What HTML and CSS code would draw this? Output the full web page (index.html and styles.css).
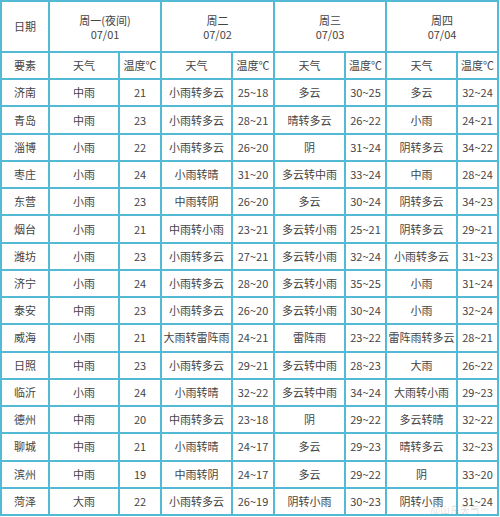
FILE: index.html
```html
<!DOCTYPE html>
<html lang="zh-CN">
<head>
<meta charset="utf-8">
<title>山东天气预报</title>
<link rel="stylesheet" href="styles.css">
</head>
<body>
<div class="page">
<div class="grid">
  <div class="c">日期</div>
  <div class="c day"><span>周一(夜间)</span><span>07/01</span></div>
  <div class="c day"><span>周二</span><span>07/02</span></div>
  <div class="c day"><span>周三</span><span>07/03</span></div>
  <div class="c day"><span>周四</span><span>07/04</span></div>

  <div class="c">要素</div>
  <div class="c">天气</div><div class="c">温度℃</div>
  <div class="c">天气</div><div class="c">温度℃</div>
  <div class="c">天气</div><div class="c">温度℃</div>
  <div class="c">天气</div><div class="c">温度℃</div>

  <div class="c">济南</div><div class="c">中雨</div><div class="c">21</div><div class="c">小雨转多云</div><div class="c">25~18</div><div class="c">多云</div><div class="c">30~25</div><div class="c">多云</div><div class="c">32~24</div>
  <div class="c">青岛</div><div class="c">中雨</div><div class="c">23</div><div class="c">小雨转多云</div><div class="c">28~21</div><div class="c">晴转多云</div><div class="c">26~22</div><div class="c">小雨</div><div class="c">24~21</div>
  <div class="c">淄博</div><div class="c">小雨</div><div class="c">22</div><div class="c">小雨转多云</div><div class="c">26~20</div><div class="c">阴</div><div class="c">31~24</div><div class="c">阴转多云</div><div class="c">34~22</div>
  <div class="c">枣庄</div><div class="c">小雨</div><div class="c">24</div><div class="c">小雨转晴</div><div class="c">31~20</div><div class="c">多云转中雨</div><div class="c">33~24</div><div class="c">中雨</div><div class="c">28~24</div>
  <div class="c">东营</div><div class="c">小雨</div><div class="c">23</div><div class="c">中雨转阴</div><div class="c">26~20</div><div class="c">多云</div><div class="c">30~24</div><div class="c">阴转多云</div><div class="c">34~23</div>
  <div class="c">烟台</div><div class="c">小雨</div><div class="c">21</div><div class="c">中雨转小雨</div><div class="c">23~21</div><div class="c">多云转小雨</div><div class="c">25~21</div><div class="c">阴转多云</div><div class="c">29~21</div>
  <div class="c">潍坊</div><div class="c">小雨</div><div class="c">23</div><div class="c">小雨转多云</div><div class="c">27~21</div><div class="c">多云转小雨</div><div class="c">32~24</div><div class="c">小雨转多云</div><div class="c">31~23</div>
  <div class="c">济宁</div><div class="c">小雨</div><div class="c">24</div><div class="c">小雨转多云</div><div class="c">28~20</div><div class="c">多云转小雨</div><div class="c">35~25</div><div class="c">小雨</div><div class="c">31~24</div>
  <div class="c">泰安</div><div class="c">中雨</div><div class="c">23</div><div class="c">小雨转多云</div><div class="c">26~20</div><div class="c">多云转小雨</div><div class="c">30~24</div><div class="c">小雨</div><div class="c">32~24</div>
  <div class="c">威海</div><div class="c">小雨</div><div class="c">21</div><div class="c">大雨转雷阵雨</div><div class="c">24~21</div><div class="c">雷阵雨</div><div class="c">23~22</div><div class="c">雷阵雨转多云</div><div class="c">28~21</div>
  <div class="c">日照</div><div class="c">中雨</div><div class="c">23</div><div class="c">小雨转多云</div><div class="c">29~21</div><div class="c">多云转中雨</div><div class="c">28~23</div><div class="c">大雨</div><div class="c">26~22</div>
  <div class="c">临沂</div><div class="c">小雨</div><div class="c">24</div><div class="c">小雨转晴</div><div class="c">32~22</div><div class="c">多云转中雨</div><div class="c">34~24</div><div class="c">大雨转小雨</div><div class="c">29~23</div>
  <div class="c">德州</div><div class="c">中雨</div><div class="c">20</div><div class="c">中雨转多云</div><div class="c">23~18</div><div class="c">阴</div><div class="c">29~22</div><div class="c">多云转晴</div><div class="c">32~22</div>
  <div class="c">聊城</div><div class="c">中雨</div><div class="c">21</div><div class="c">小雨转晴</div><div class="c">24~17</div><div class="c">多云</div><div class="c">29~23</div><div class="c">晴转多云</div><div class="c">32~23</div>
  <div class="c">滨州</div><div class="c">中雨</div><div class="c">19</div><div class="c">中雨转阴</div><div class="c">24~17</div><div class="c">多云</div><div class="c">29~22</div><div class="c">阴</div><div class="c">33~20</div>
  <div class="c">菏泽</div><div class="c">大雨</div><div class="c">22</div><div class="c">小雨转多云</div><div class="c">26~19</div><div class="c">阴转小雨</div><div class="c">30~23</div><div class="c">阴转小雨</div><div class="c">31~24</div>
</div>
<div class="watermark">@山东天气</div>
</div>
</body>
</html>
```

FILE: styles.css
```css
html, body {
  margin: 0;
  padding: 0;
  background: #ffffff;
}

.page {
  position: relative;
  width: 500px;
  height: 517px;
}

.grid {
  display: grid;
  width: 499px;
  box-sizing: border-box;
  padding: 2px;
  gap: 2px;
  background: #52bad4;
  grid-template-columns: 46px 68px 40px 69px 40px 69px 39px 69px 39px;
  grid-template-rows: 49px repeat(17, 25.24px);
  font-family: "Noto Sans CJK SC", "Microsoft YaHei", sans-serif;
  font-size: 11px;
  color: #444444;
}

.c {
  background: #ffffff;
  display: flex;
  align-items: center;
  justify-content: center;
  text-align: center;
  white-space: nowrap;
  line-height: 13px;
}

.day {
  grid-column: span 2;
  flex-direction: column;
  gap: 0;
  padding-top: 1px;
}

.day span {
  display: block;
  line-height: 14px;
  height: 14px;
}

.watermark {
  position: absolute;
  right: 20px;
  bottom: 1px;
  font-family: "Noto Sans CJK SC", sans-serif;
  font-size: 10px;
  line-height: 12px;
  color: rgba(150, 150, 150, 0.3);
}
```
